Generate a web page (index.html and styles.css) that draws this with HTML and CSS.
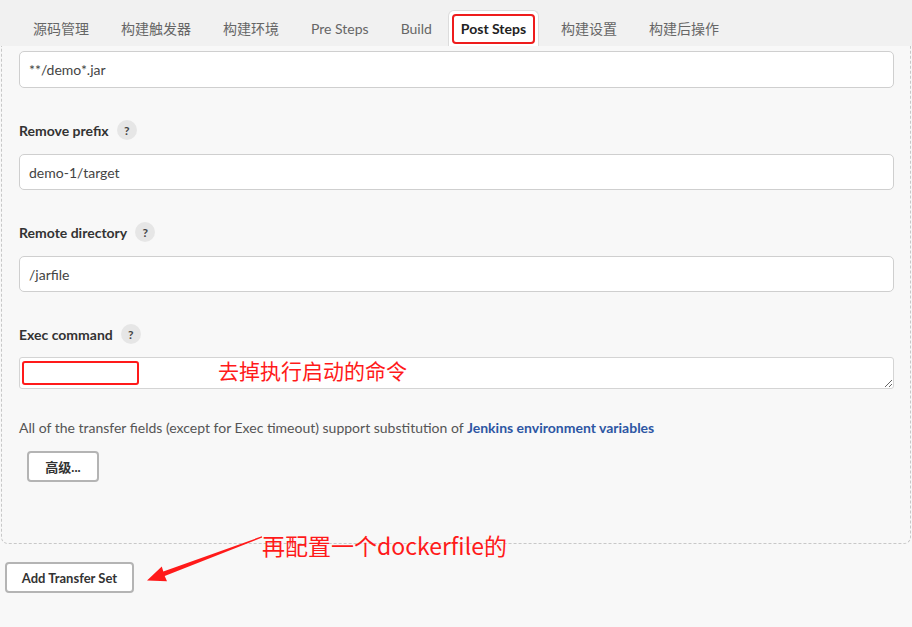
FILE: index.html
```html
<!DOCTYPE html>
<html lang="zh">
<head>
<meta charset="utf-8">
<title>Post Steps</title>
<link rel="stylesheet" href="styles.css">
</head>
<body>
<div class="tabbar">
  <div class="tab">源码管理</div>
  <div class="tab">构建触发器</div>
  <div class="tab">构建环境</div>
  <div class="tab">Pre Steps</div>
  <div class="tab">Build</div>
  <div class="tab active"><span class="mark">Post Steps</span></div>
  <div class="tab">构建设置</div>
  <div class="tab">构建后操作</div>
</div>

<div class="panel">
  <input class="text-input first" type="text" value="**/demo*.jar">

  <div class="field">
    <div class="label-row"><span class="label">Remove prefix</span><span class="help">?</span></div>
    <input class="text-input" type="text" value="demo-1/target">
  </div>

  <div class="field">
    <div class="label-row"><span class="label">Remote directory</span><span class="help">?</span></div>
    <input class="text-input" type="text" value="/jarfile">
  </div>

  <div class="field">
    <div class="label-row tight"><span class="label">Exec command</span><span class="help">?</span></div>
    <div class="textarea-wrap">
      <textarea class="textarea"></textarea>
      <div class="anno-box"></div>
      <div class="anno-text note1">去掉执行启动的命令</div>
    </div>
  </div>

  <p class="hint">All of the transfer fields (except for Exec timeout) support substitution of <a class="link" href="#">Jenkins environment variables</a></p>

  <button class="btn adv">高级...</button>
</div>

<div class="footer">
  <button class="btn add">Add Transfer Set</button>
</div>

<div class="anno-text note2">再配置一个dockerfile的</div>
<svg class="arrow" width="912" height="627" viewBox="0 0 912 627">
  <polygon fill="#ff1a1a" points="261.8,536.3 163.3,571.6 161.8,566.4 147,580.5 167,581.2 164.7,576.0 262.2,537.6"/>
</svg>
</body>
</html>
```

FILE: styles.css
```css
* { box-sizing: border-box; }

html, body {
  margin: 0;
  padding: 0;
  background: #f8f8f8;
  font-family: "Lato", "Noto Sans CJK SC", sans-serif;
  font-size: 14px;
  color: #333;
}

body {
  position: relative;
  width: 912px;
  height: 627px;
  overflow: hidden;
}

.tabbar {
  display: flex;
  align-items: flex-end;
  height: 46px;
  padding-left: 17px;
  background: #f1f1f1;
}

.tab {
  height: 36px;
  padding: 0 16px;
  display: flex;
  align-items: center;
  color: #666;
  font-size: 14px;
  white-space: nowrap;
}

.tab.active {
  background: #fff;
  border: 1px solid #dcdcdc;
  border-bottom: none;
  border-radius: 6px 6px 0 0;
  padding: 0 3px;
  margin: 0 6px 0 0;
}

.mark {
  display: flex;
  align-items: center;
  height: 30px;
  padding: 0 7px;
  border: 2px solid #ee1c1c;
  border-radius: 4px;
  color: #222;
  font-weight: 700;
}

.panel {
  margin-left: 1px;
  width: 910px;
  padding: 5px 16px 61px 17px;
  border: 1px dashed #c8c8c8;
  border-top: none;
  border-radius: 0 0 7px 7px;
}

.text-input {
  display: block;
  width: 100%;
  height: 36px;
  padding: 0 9px;
  border: 1px solid #cfcfcf;
  border-radius: 5px;
  background: #fff;
  font-family: inherit;
  font-size: 14px;
  color: #444;
  outline: none;
}

.text-input.first { height: 37px; }

.field { margin-top: 30px; }

.label-row {
  display: flex;
  align-items: center;
  gap: 8px;
  height: 24px;
  margin-bottom: 12px;
}

.label-row.tight { margin-bottom: 11px; }

.label {
  font-weight: 700;
  color: #333;
}

.help {
  width: 20px;
  height: 20px;
  border-radius: 50%;
  background: #e6e6e6;
  color: #444;
  font-size: 12px;
  font-weight: 700;
  display: flex;
  align-items: center;
  justify-content: center;
}

.textarea-wrap { position: relative; }

.textarea {
  display: block;
  width: 100%;
  height: 32px;
  border: 1px solid #d4d4d4;
  border-radius: 3px;
  background: #fff;
  resize: vertical;
  outline: none;
}

.anno-box {
  position: absolute;
  left: 3px;
  top: 4px;
  width: 117px;
  height: 24px;
  border: 2px solid #ff1a1a;
  border-radius: 3px;
}

.anno-text {
  position: absolute;
  font-family: "Noto Sans CJK SC", sans-serif;
  font-size: 21px;
  color: #ff1a1a;
  line-height: 1;
  white-space: nowrap;
}

.note1 { left: 199px; top: 3px; }
.note2 { left: 262px; top: 534px; font-size: 23px; }

.hint {
  margin: 29px 0 0;
  color: #555;
  line-height: 20px;
}

.link {
  color: #2d56a3;
  font-weight: 700;
  text-decoration: none;
}

.btn {
  display: block;
  height: 31px;
  background: #fff;
  border: 2px solid #b4b4b4;
  border-radius: 4px;
  font-family: inherit;
  font-size: 13px;
  font-weight: 700;
  color: #333;
}

.adv {
  margin: 13px 0 0 8px;
  width: 72px;
}

.footer { padding: 18px 0 0 5px; }

.add { width: 129px; }

.arrow {
  position: absolute;
  left: 0;
  top: 0;
  pointer-events: none;
}
```
